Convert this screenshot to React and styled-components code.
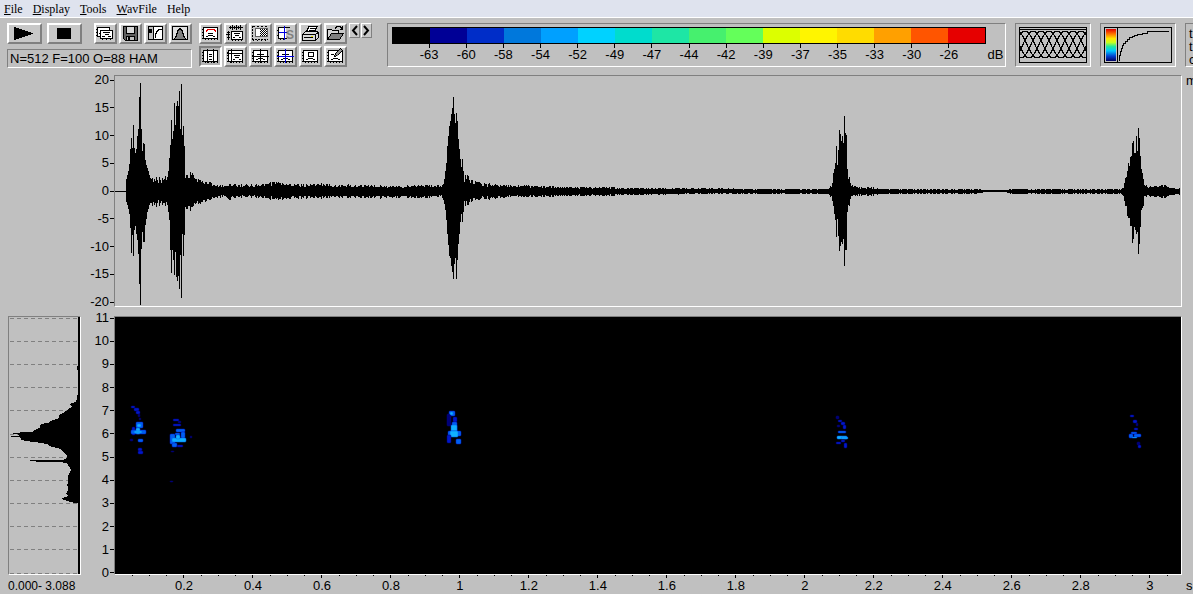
import React from "react"
import styled, { createGlobalStyle } from "styled-components"

const GlobalStyle = createGlobalStyle`
  * {
    box-sizing: border-box;
  }
  body {
    margin: 0;
    background: #c0c0c0;
    color: #000;
    font: 13px/14px "Liberation Sans", Arial, sans-serif;
  }
  button {
    font: inherit;
    color: inherit;
  }
`

const Window = styled.div`
  display: flex;
  flex-direction: column;
  min-height: 100vh;
  overflow: hidden;
`

const MenuBar = styled.nav`
  display: flex;
  gap: 10px;
  height: 18px;
  padding-left: 4px;
  background: #dfe3ee;
  border-bottom: 1px solid #fff;
`

const MenuItem = styled.button`
  padding: 0;
  border: 0;
  background: none;
  font: 12px/16px "Liberation Serif", "Times New Roman", serif;
`

const ToolBar = styled.header`
  display: flex;
  align-items: flex-start;
  height: 57px;
  padding: 5px 0 0 7px;
`

const Transport = styled.div`
  display: flex;
  flex-direction: column;
  gap: 5px;
  width: 185px;
  margin-right: 7px;
`

const TransportRow = styled.div`
  display: flex;
  justify-content: space-between;
`

const ButtonRow = styled.div`
  display: flex;
  gap: ${p => p.$gap}px;
`

const ToolGrid = styled.div`
  display: grid;
  grid-template-columns: repeat(6, 23px);
  gap: 2px;
  margin-right: 2px;
`

const ToolButton = styled.button`
  display: flex;
  align-items: center;
  justify-content: center;
  width: ${p => (p.$wide ? 35 : 23)}px;
  height: 21px;
  padding: 0;
  background: ${p => (p.$pressed ? "#b4b4b4" : "#c8c8c8")};
  border: 2px solid;
  border-color: ${p =>
    p.$pressed ? "#808080 #fff #fff #808080" : "#fff #808080 #808080 #fff"};

  svg {
    display: block;
    flex: none;
  }
`

const ScrollButton = styled(ToolButton)`
  width: 11px;
  height: 15px;
  border-width: 1px;
`

const Scroller = styled.div`
  display: flex;
  gap: 1px;
  margin-right: 15px;
`

const Sunken = styled.div`
  border: 1px solid;
  border-color: #808080 #fff #fff #808080;
`

const Status = styled(Sunken)`
  height: 19px;
  padding: 0 2px;
  line-height: 17px;
  white-space: nowrap;
`

const ScalePanel = styled(Sunken)`
  flex: 1;
  height: 44px;
  padding: 3px 0 0 4px;
`

const ScaleBar = styled.div`
  display: flex;
  height: 17px;
  margin-right: 19px;
  border: 1px solid #000;
`

const Swatch = styled.div`
  flex: 1;
  background: ${p => p.$color};
`

const ScaleLabels = styled.div`
  display: grid;
  grid-template-columns: 0.5fr repeat(15, 1fr) 0.5fr 19px;
`

const ScaleLabel = styled.span`
  text-align: center;

  &::before {
    content: "";
    display: block;
    width: 1px;
    height: 4px;
    margin: 0 auto;
    background: ${p => (p.$unit ? "transparent" : "#000")};
  }
`

const PreviewPanel = styled(Sunken)`
  flex: none;
  width: 76px;
  height: 44px;
  margin-left: 9px;
  padding: 3px;

  svg {
    display: block;
  }
`

const CursorPanel = styled(Sunken)`
  flex: none;
  width: 8px;
  height: 44px;
  margin-left: 9px;
  padding: 3px 0 0 3px;
  border-right: 0;
  line-height: 13px;
  overflow: hidden;

  span {
    display: block;
  }
`

const Row = styled.section`
  display: grid;
  grid-template-columns: 73px 33px minmax(0, 1fr) 11px;
  flex: ${p => p.$grow};
  min-height: ${p => p.$min}px;
  margin-bottom: ${p => p.$gap || 0}px;
  padding-left: 8px;
`

const Plot = styled(Sunken)`
  grid-column: ${p => p.$column};
  display: flex;
  min-height: 0;
  background: ${p => p.$color || "transparent"};
  overflow: hidden;

  svg {
    display: block;
    flex: 1;
    width: 100%;
    height: 100%;
  }
`

const YAxis = styled.div`
  grid-column: 2;
  display: flex;
  flex-direction: column;
  justify-content: space-between;
  padding: ${p => p.$inset}px 0;
`

const YLabel = styled.span`
  display: flex;
  align-items: center;
  justify-content: flex-end;
  gap: 1px;
  height: 4px;

  &::after {
    content: "";
    width: 4px;
    height: 1px;
    background: #000;
  }
`

const Unit = styled.span`
  grid-column: 4;
  padding-left: 4px;
  line-height: 12px;
  overflow: hidden;
`

const AxisRow = styled(Row)`
  height: 19px;
`

const Range = styled.span`
  padding-top: 4px;
  font-size: 12px;
  white-space: nowrap;
`

const TimeAxis = styled.div`
  grid-column: 3;
  padding: 0 1px;

  svg {
    display: block;
    width: 100%;
    height: 4px;
  }
`

// the axis covers 3.09 s, a label every 0.2 s
const TimeLabels = styled.div`
  display: flex;
  padding-left: calc(100% * 0.1 / 3.09);
`

const TimeLabel = styled.span`
  flex: none;
  width: calc(100% * 0.2 / 2.99);
  text-align: center;
`

const TimeUnit = styled(Unit)`
  padding-top: 4px;
  line-height: 14px;
`

const menu = [
  ["F", "ile"],
  ["D", "isplay"],
  ["T", "ools"],
  ["W", "avFile"],
  ["", "Help"]
]

const colors = [
  "#000000",
  "#000096",
  "#002dc8",
  "#0078dc",
  "#00a0ff",
  "#00d2ff",
  "#00dccd",
  "#1ee6a5",
  "#46f06e",
  "#64ff5a",
  "#dcff00",
  "#fff500",
  "#ffdc00",
  "#ffa000",
  "#ff5500",
  "#e60000"
]

const levels = [-63, -60, -58, -54, -52, -49, -47, -44, -42, -39, -37, -35, -33, -30, -26]
const amplitudes = [20, 15, 10, 5, 0, -5, -10, -15, -20]
const frequencies = [11, 10, 9, 8, 7, 6, 5, 4, 3, 2, 1, 0]
const times = Array.from({ length: 15 }, (_, i) => String((i + 1) / 5))

// column, peak above zero, peak below zero
const envelope = [
  [115, 0, 0], [125, 0, 0], [126, 12, 10], [127, 16, 13], [128, 20, 17],
  [129, 27, 22], [130, 42, 36], [131, 53, 61], [132, 43, 43], [133, 66, 64],
  [134, 43, 38], [135, 38, 34], [136, 42, 42], [137, 55, 48], [138, 62, 62],
  [139, 94, 92], [140, 108, 113], [141, 62, 57], [142, 40, 40], [143, 48, 50],
  [144, 47, 50], [145, 31, 33], [146, 26, 27], [147, 23, 20], [148, 19, 16],
  [150, 19, 16], [152, 13, 14], [155, 15, 16], [158, 12, 12], [160, 15, 16],
  [163, 12, 12], [166, 17, 15], [168, 20, 20], [169, 33, 28], [170, 46, 58],
  [171, 71, 81], [172, 52, 58], [173, 60, 68], [174, 88, 83], [175, 66, 60],
  [176, 85, 85], [177, 90, 89], [178, 85, 84], [179, 100, 97], [180, 62, 63],
  [181, 107, 106], [182, 56, 42], [183, 65, 64], [184, 45, 43], [185, 20, 22],
  [187, 16, 17], [189, 20, 22], [192, 18, 15], [195, 14, 13], [197, 11, 11],
  [200, 11, 12], [205, 10, 11], [210, 9, 8], [215, 6, 6], [225, 6, 5],
  [228, 7, 9], [232, 7, 6], [245, 6, 5], [265, 7, 6], [276, 10, 8], [284, 7, 7],
  [320, 7, 6], [360, 6, 6], [400, 5, 6], [441, 6, 5], [443, 7, 8],
  [444, 12, 12], [445, 20, 18], [446, 28, 28], [447, 45, 42], [448, 55, 53],
  [449, 65, 64], [450, 70, 66], [451, 77, 74], [452, 83, 80], [453, 94, 87],
  [454, 77, 72], [455, 68, 66], [456, 78, 87], [457, 70, 68], [458, 52, 52],
  [459, 42, 42], [460, 32, 30], [461, 24, 22], [462, 32, 30], [463, 20, 20],
  [464, 15, 15], [466, 17, 13], [468, 14, 12], [470, 11, 10], [475, 10, 8],
  [480, 8, 7], [490, 7, 7], [515, 6, 5], [540, 5, 5], [560, 4, 4], [600, 4, 4],
  [640, 3, 3], [700, 3, 2], [760, 2, 2], [827, 2, 2], [830, 5, 5], [832, 8, 9],
  [833, 18, 14], [834, 22, 22], [835, 28, 28], [836, 45, 45], [838, 41, 44],
  [839, 61, 59], [840, 57, 54], [841, 50, 50], [842, 55, 52], [843, 48, 47],
  [844, 75, 74], [845, 58, 58], [846, 56, 58], [847, 22, 20], [848, 12, 13],
  [849, 14, 14], [850, 8, 7], [852, 6, 4], [860, 4, 4], [870, 4, 4],
  [880, 2, 2], [975, 2, 2], [985, 1, 0], [1005, 1, 0], [1010, 2, 2],
  [1120, 2, 2], [1123, 3, 4], [1125, 13, 14], [1126, 14, 14], [1127, 20, 24],
  [1128, 28, 26], [1129, 25, 26], [1130, 34, 34], [1131, 35, 34],
  [1132, 48, 51], [1133, 50, 47], [1134, 38, 35], [1135, 38, 38],
  [1136, 55, 42], [1137, 40, 40], [1138, 63, 62], [1139, 53, 52],
  [1140, 35, 35], [1141, 22, 18], [1142, 18, 16], [1143, 12, 14], [1144, 8, 6],
  [1148, 5, 5], [1155, 5, 5], [1163, 6, 6], [1170, 4, 4], [1180, 3, 3]
]

const buildWave = () => {
  let seed = 7
  let path = ""
  for (let i = 1; i < envelope.length; i++) {
    const [x0, up0, down0] = envelope[i - 1]
    const [x1, up1, down1] = envelope[i]
    for (let x = x0; x < x1; x++) {
      seed = (seed * 16807) % 2147483647
      const t = (x - x0) / (x1 - x0)
      // between the measured columns the signal flickers
      const flicker = x1 - x0 > 1 ? 0.6 + (0.5 * (seed % 1000)) / 1000 : 1
      const up = Math.round((up0 + (up1 - up0) * t) * flicker)
      const down = Math.round((down0 + (down1 - down0) * t) * flicker)
      path += `M${x + 0.5} ${191 - up}V${192 + down}`
    }
  }
  return path
}

const wavePath = buildWave()

const blue = ["#000078", "#0018c8", "#0060f0", "#10b0ff"]

// x, y, width, height, shade
const calls = [
  [131, 406, 4, 2, 1], [134, 408, 5, 3, 1], [136, 411, 4, 3, 1],
  [138, 414, 2, 3, 0], [139, 418, 2, 2, 0], [136, 422, 7, 6, 2],
  [132, 427, 3, 8, 1], [131, 430, 15, 4, 2], [137, 424, 4, 3, 3],
  [136, 428, 4, 6, 3], [134, 431, 8, 2, 3], [138, 439, 5, 3, 2],
  [138, 448, 4, 3, 1], [138, 451, 5, 3, 1], [130, 439, 3, 2, 0],
  [173, 419, 6, 2, 1], [178, 421, 3, 2, 0], [173, 424, 8, 2, 1],
  [176, 429, 9, 3, 2], [181, 432, 4, 6, 2], [170, 434, 5, 10, 2],
  [175, 433, 5, 2, 2], [172, 438, 14, 4, 3], [176, 435, 4, 4, 3],
  [172, 443, 5, 4, 2], [177, 445, 6, 2, 1], [171, 451, 3, 1, 0],
  [170, 481, 3, 1, 0], [190, 436, 2, 2, 0],
  [449, 411, 6, 5, 2], [447, 414, 4, 12, 0], [450, 412, 3, 3, 3],
  [453, 417, 4, 5, 1], [452, 422, 5, 9, 2], [451, 425, 6, 7, 3],
  [448, 431, 13, 5, 2], [450, 431, 8, 6, 3], [447, 435, 4, 8, 1],
  [456, 439, 5, 5, 2],
  [836, 416, 3, 3, 0], [838, 420, 4, 2, 1], [841, 422, 4, 3, 1],
  [843, 425, 3, 4, 1], [837, 425, 3, 2, 0], [838, 431, 8, 2, 2],
  [837, 436, 10, 3, 3], [841, 437, 7, 2, 3], [836, 442, 5, 2, 1],
  [841, 440, 4, 2, 1], [844, 443, 3, 5, 1],
  [1130, 415, 4, 2, 1], [1133, 420, 4, 3, 1], [1136, 423, 2, 3, 0],
  [1134, 428, 4, 2, 1], [1131, 432, 6, 2, 2], [1129, 434, 4, 4, 2],
  [1134, 434, 7, 3, 2], [1132, 437, 5, 1, 3], [1137, 442, 3, 3, 0],
  [1138, 445, 3, 3, 1]
]

// mean spectrum, grows leftwards from the right edge
const spectrum =
  "235,50 235,195 231,198 231,208 235,212 235,275 231,290 229,305 208,313 " +
  "216,320 208,325 192,338 177,345 177,355 160,360 145,368 122,373 120,384 " +
  "108,388 98,395 38,399 38,402 58,404 58,407 34,408 34,411 70,413 60,417 " +
  "72,422 110,427 140,432 155,440 183,447 190,457 200,465 200,474 190,479 " +
  "90,480 90,484 160,486 200,488 206,498 214,510 205,525 205,540 202,555 " +
  "205,570 198,580 205,588 186,594 186,598 198,602 215,607 235,611 235,822 " +
  "239,822 239,50"

const hannWindow = start => {
  let path = ""
  for (let x = 0; x <= 40; x += 2) {
    const y = 31 - 27 * Math.sin((Math.PI * x) / 40) ** 2
    path += `${x ? "L" : "M"}${start + x} ${y.toFixed(1)}`
  }
  return path
}

const Icon = ({ children, width = 19 }) => (
  <svg
    width={width}
    height="17"
    viewBox={`0 0 ${width} 17`}
    fill="none"
    stroke="#000"
    shapeRendering="crispEdges"
    aria-hidden="true"
  >
    {children}
  </svg>
)

const Frame = ({ children }) => (
  <Icon>
    <rect x="2.5" y="2.5" width="14" height="11" fill="#fff" />
    <path d="M1 4.5h1M1 7.5h1M1 10.5h1M1 13.5h1M4.5 14v1M7.5 14v1M10.5 14v1M13.5 14v1M16.5 14v1" />
    {children}
  </Icon>
)

const fileTools = [
  [
    "Copy",
    <Icon>
      <path d="M4.5 11.5h-3v-9h12v3" fill="#fff" />
      <path d="M0 4.5h1M0 7.5h1M0 10.5h1" />
      <rect x="4.5" y="5.5" width="12" height="8" fill="#fff" />
      <path d="M7 7.5h7M9 9.5h4M6 11.5h3M12 11.5h3M3 8.5h1M3 11.5h1M6.5 14v1M10.5 14v1M14.5 14v1" />
    </Icon>
  ],
  [
    "Save",
    <Icon>
      <path d="M2.5 1.5h14v14h-12l-2-2z" fill="#606060" />
      <rect x="5.5" y="1.5" width="8" height="7" fill="#d8d8d8" />
      <rect x="5.5" y="11.5" width="8" height="4" fill="#c0c0c0" />
      <path d="M7.5 12v3" strokeWidth="2" />
    </Icon>
  ],
  [
    "Contrast",
    <Icon>
      <rect x="2.5" y="1.5" width="14" height="13" fill="#fff" />
      <path d="M3 2h4v12h-4z" fill="#c0c0c0" stroke="none" />
      <path d="M3 4h3v4h-3z" fill="#000" stroke="none" />
      <path d="M7.500 2v12M9.5 13v-3l1-3 2-2 2-1h1" />
    </Icon>
  ],
  [
    "Window",
    <Icon>
      <rect x="1.5" y="1.5" width="15" height="13" fill="#e0e0e0" />
      <path d="M3 14.5l2-3 2-6 2-2 2 2 2 6 2 3z" fill="#808080" />
    </Icon>
  ]
]

const viewTools = [
  [
    "Spectrogram",
    <Frame>
      <path d="M5 6.5v-1h1v-1h7v1h1v1" stroke="#e00000" />
      <path d="M7 8.5h5M5 11.5h2M7 10.5h5M12 11.5h2" />
    </Frame>
  ],
  [
    "Waveform",
    <Icon>
      <path d="M3 2.5h14M4.5 1v3M6.5 0v5M8.5 1v3M10.5 0v5M12.5 1v3M14.5 0v5" />
      <rect x="5.5" y="6.5" width="11" height="8" fill="#fff" />
      <path d="M1 7.5h3M0 9.5h4M1 12.5h3M2.5 6v9M8 8.5h6M9 10.5h4M7 12.5h2M13 12.5h2M6.5 15v1M9.5 15v1M12.5 15v1M15.5 15v1" />
    </Icon>
  ],
  [
    "Selection",
    <Icon>
      <path d="M1.5 1v13h15" strokeDasharray="2 1" />
      <path d="M2 1.5h15" strokeDasharray="2 2" />
      <rect x="4.5" y="3.5" width="12" height="8" fill="#fff" stroke="#606060" />
      <path d="M9 4.5h7M9 6.5h7M9 8.5h7M9 10.5h7" strokeDasharray="1 1" />
      <path d="M10 5.5h6M10 7.5h6M10 9.5h6" strokeDasharray="1 1" />
      <path d="M2 15.5h16" strokeDasharray="1 3" />
    </Icon>
  ],
  [
    "Spectrum section",
    <Icon>
      <path d="M3 3h7v10h-7z" fill="#fff" stroke="none" />
      <path d="M14 2.5h-11.5v11h8M1 5.5h1M1 10.5h1M4.5 14v1M7.5 14v1" />
      <path d="M3 7.5h8M8.5 1v14" stroke="#0000e0" />
      <text
        x="10"
        y="14"
        fill="#808080"
        stroke="none"
        fontSize="12"
        fontWeight="bold"
      >
        S
      </text>
    </Icon>
  ],
  [
    "Print",
    <Icon>
      <path d="M5 7.5l3-6h8l-3 6" fill="#fff" />
      <path d="M9 3.5h5M8 5.5h5" />
      <path d="M1.5 9.5l3-3h12l1 2v4l-3 3h-13z" fill="#d8d8d8" />
      <path d="M2 9.5h12v6M14.5 9.5l3-2M3 12.5h9" />
      <path d="M10 11h2v1h-2z" fill="#e8e000" stroke="none" />
    </Icon>
  ],
  [
    "Open",
    <Icon>
      <path d="M1.5 14.5v-10h4l1 1h6v3" fill="#d8d8d8" />
      <path d="M1.5 14.5l4-6h12l-4 6z" fill="#808080" />
      <path d="M9 3.5l2-2h3l2 2M16.5 1v4M14 4.5h3" />
    </Icon>
  ],
  [
    "Vertical cursors",
    <Frame>
      <path d="M6.5 1v14M12.5 1v14M8 6.5h3M8 8.5h3M8 11.5h3" />
    </Frame>
  ],
  [
    "Corner cursor",
    <Frame>
      <path d="M1 5.5h16M5.5 1v14M8 7.5h6M9 9.500h4M7 11.5h2M13 11.5h2" />
    </Frame>
  ],
  [
    "Cross cursor",
    <Frame>
      <path d="M1 8.5h17M9.5 1v14M6 6.5h7M5 11.5h2M7 10.5h5M12 11.5h2" />
    </Frame>
  ],
  [
    "Linked cursor",
    <Frame>
      <path d="M6 6.5h7M5 11.5h2M7 10.5h5M12 11.5h2" />
      <path d="M1 8.5h17M9.5 1v14" stroke="#0000e0" />
    </Frame>
  ],
  [
    "Box",
    <Frame>
      <rect x="7.5" y="4.5" width="5" height="4" fill="#fff" />
      <path d="M5 11.5h2M7 10.5h5M12 11.5h2" />
    </Frame>
  ],
  [
    "Edit",
    <Frame>
      <path d="M5 11.5h2M7 10.5h5M12 11.5h2M5 6.5h3" />
      <path d="M8.5 8.5l1-3 5-5 2 2-5 5z" fill="#909090" />
    </Frame>
  ]
]

const App = () => (
  <Window>
    <GlobalStyle />
    <MenuBar>
      {menu.map(([key, rest]) => (
        <MenuItem key={rest}>
          {key && <u>{key}</u>}
          {rest}
        </MenuItem>
      ))}
    </MenuBar>

    <ToolBar>
      <Transport>
        <TransportRow>
          <ButtonRow $gap={5}>
            <ToolButton $wide aria-label="Play">
              <Icon width={27}>
                <path d="M3 2l19 6v1l-19 6z" fill="#000" stroke="none" />
              </Icon>
            </ToolButton>
            <ToolButton $wide aria-label="Stop">
              <Icon width={27}>
                <path d="M6 3h14v11h-14z" fill="#000" stroke="none" />
              </Icon>
            </ToolButton>
          </ButtonRow>
          <ButtonRow $gap={2}>
            {fileTools.map(([label, icon]) => (
              <ToolButton key={label} aria-label={label}>
                {icon}
              </ToolButton>
            ))}
          </ButtonRow>
        </TransportRow>
        <Status>N=512 F=100 O=88 HAM</Status>
      </Transport>

      <ToolGrid>
        {viewTools.map(([label, icon]) => (
          <ToolButton
            key={label}
            aria-label={label}
            $pressed={label === "Vertical cursors"}
          >
            {icon}
          </ToolButton>
        ))}
      </ToolGrid>

      <Scroller>
        <ScrollButton aria-label="Previous">
          <svg width="7" height="11" fill="none" stroke="#000" strokeWidth="2">
            <path d="M6 1L2 5.5L6 10" />
          </svg>
        </ScrollButton>
        <ScrollButton aria-label="Next">
          <svg width="7" height="11" fill="none" stroke="#000" strokeWidth="2">
            <path d="M1 1L5 5.5L1 10" />
          </svg>
        </ScrollButton>
      </Scroller>

      <ScalePanel>
        <ScaleBar>
          {colors.map(color => (
            <Swatch key={color} $color={color} />
          ))}
        </ScaleBar>
        <ScaleLabels>
          <span />
          {levels.map(level => (
            <ScaleLabel key={level}>{level}</ScaleLabel>
          ))}
          <span />
          <ScaleLabel $unit>dB</ScaleLabel>
        </ScaleLabels>
      </ScalePanel>

      <PreviewPanel>
        <svg
          width="68"
          height="36"
          fill="none"
          stroke="#000"
          shapeRendering="crispEdges"
        >
          <clipPath id="windows">
            <rect x="1" y="1" width="66" height="34" />
          </clipPath>
          <rect x="0.5" y="0.5" width="67" height="35" />
          <path d="M1 2.5h66" />
          <path
            clipPath="url(#windows)"
            d={Array.from({ length: 14 }, (_, i) => hannWindow(i * 8 - 38)).join("")}
          />
        </svg>
      </PreviewPanel>

      <PreviewPanel>
        <svg
          width="68"
          height="36"
          fill="none"
          stroke="#000"
          shapeRendering="crispEdges"
        >
          <linearGradient id="rainbow" x1="0" y1="0" x2="0" y2="1">
            <stop offset="0" stopColor="#e00000" />
            <stop offset="0.15" stopColor="#ff7000" />
            <stop offset="0.3" stopColor="#ffe800" />
            <stop offset="0.42" stopColor="#c8ff20" />
            <stop offset="0.55" stopColor="#20e8a0" />
            <stop offset="0.68" stopColor="#00c8ff" />
            <stop offset="0.85" stopColor="#0040d0" />
            <stop offset="1" stopColor="#000060" />
          </linearGradient>
          <rect x="0.5" y="0.5" width="67" height="35" />
          <rect x="2" y="2" width="10" height="32" fill="url(#rainbow)" stroke="none" />
          <path d="M13.5 1v34" />
          <path d="M15.5 33.5v-5h1v-4h1v-3h1v-3h1v-2h2v-2h2v-2h2v-2h3v-1h2v-1h3v-1h5v-1h5v-2h21v-1" />
        </svg>
      </PreviewPanel>

      <CursorPanel>
        <span>t</span>
        <span>t</span>
        <span>c</span>
      </CursorPanel>
    </ToolBar>

    <Row $grow="232 1 0" $min={160} $gap={9}>
      <YAxis $inset={3}>
        {amplitudes.map(value => (
          <YLabel key={value}>{value}</YLabel>
        ))}
      </YAxis>
      <Plot $column={3}>
        <svg
          viewBox="115 76 1066 230"
          preserveAspectRatio="none"
          stroke="#000"
          shapeRendering="crispEdges"
        >
          <path d={wavePath} />
        </svg>
      </Plot>
      <Unit>m</Unit>
    </Row>

    <Row $grow="259 1 0" $min={180}>
      <Plot $column={1}>
        <svg
          viewBox="27 51 213 771"
          preserveAspectRatio="none"
          shapeRendering="crispEdges"
        >
          {frequencies.map(f => (
            <path
              key={f}
              d={`M30 ${819 - f * 69.5}H234`}
              stroke="#808080"
              strokeWidth="3"
              strokeDasharray="12 9"
            />
          ))}
          <polygon points={spectrum} />
        </svg>
      </Plot>
      <YAxis $inset={0}>
        {frequencies.map(value => (
          <YLabel key={value}>{value}</YLabel>
        ))}
      </YAxis>
      <Plot $column={3} $color="#000">
        <svg viewBox="115 317 1066 257" preserveAspectRatio="none">
          {calls.map(([x, y, width, height, shade], i) => (
            <rect
              key={i}
              x={x}
              y={y}
              width={width}
              height={height}
              rx="1"
              fill={blue[shade]}
              stroke={blue[Math.max(shade - 1, 0)]}
              strokeOpacity="0.5"
            />
          ))}
        </svg>
      </Plot>
    </Row>

    <AxisRow as="footer" $grow="none">
      <Range>0.000- 3.088</Range>
      <TimeAxis>
        <svg
          viewBox="0 0 3090 4"
          preserveAspectRatio="none"
          shapeRendering="crispEdges"
        >
          {Array.from({ length: 61 }, (_, i) => (
            <path
              key={i}
              d={`M${(i + 1) * 50} 0v${(i + 1) % 4 ? 1 : 3}`}
              stroke="#000"
              vectorEffect="non-scaling-stroke"
            />
          ))}
        </svg>
        <TimeLabels>
          {times.map(time => (
            <TimeLabel key={time}>{time}</TimeLabel>
          ))}
        </TimeLabels>
      </TimeAxis>
      <TimeUnit>s</TimeUnit>
    </AxisRow>
  </Window>
)

export default App
